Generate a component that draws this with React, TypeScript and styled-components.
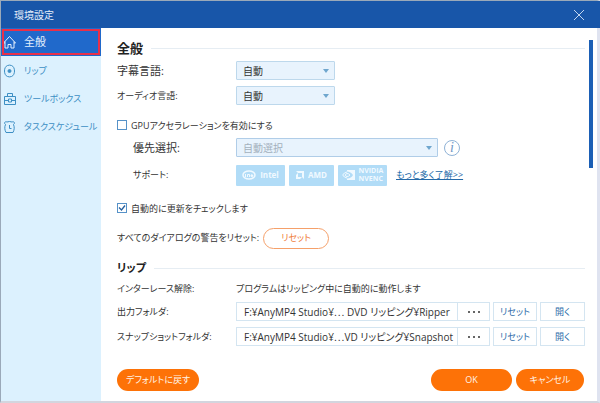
import React, { useState } from "react";
import styled, { createGlobalStyle } from "styled-components";

const blue = "#1856a9";
const orange = "#fd7207";
const uiFont = `"Open Sans", "Noto Sans CJK JP", sans-serif`;

const GlobalStyle = createGlobalStyle`
  *, *::before, *::after { box-sizing: border-box; }
  html, body, #root { height: 100%; }
  body {
    margin: 0;
    background: #fff;
    color: #333;
    font-family: ${uiFont};
    font-feature-settings: "palt";
    font-size: 11px;
    line-height: 16px;
  }
  button, input, select { font: inherit; font-feature-settings: inherit; color: inherit; margin: 0; }
`;

const Dialog = styled.div`
  min-height: 100%;
  display: grid;
  grid-template-rows: 27px 1fr;
  border: 1px solid #9aa9b9;
  border-right: 3px solid #dfe3f0;
  border-bottom: 2px solid #d3d5de;
`;

const TitleBar = styled.header`
  display: flex;
  align-items: center;
  justify-content: space-between;
  margin-right: -3px;
  padding: 0 15px 0 13px;
  background: ${blue};
  color: #e4eefa;
`;

const Title = styled.h1`
  margin: 0;
  font-size: 10px;
  font-weight: 400;
`;

const CloseButton = styled.button`
  display: flex;
  padding: 0;
  border: 0;
  background: none;
  color: #c3d6ef;
`;

const Body = styled.div`
  display: grid;
  grid-template-columns: 100px 1fr;
`;

const Sidebar = styled.nav`
  background: #dcf1fe;
`;

const NavItem = styled.button<{ $active?: boolean }>`
  display: flex;
  align-items: center;
  gap: 8px;
  width: 100%;
  height: 28px;
  padding: 0 0 0 1px;
  border: 0;
  background: ${(p) => (p.$active ? "#2069cb" : "none")};
  color: ${(p) => (p.$active ? "#e3effc" : "#3d8fc4")};
  outline: ${(p) => (p.$active ? "2px solid #e8304a" : "none")};
  outline-offset: -3px;
  text-align: left;
  white-space: nowrap;
  & > svg { flex: none; }
  &:first-child { margin-bottom: 1px; }
`;

const Main = styled.main`
  display: flex;
  flex-direction: column;
  min-width: 0;
  background: #fff;
`;

const ScrollArea = styled.div`
  display: flex;
  flex: 1;
  padding: 12px 4px 0 16px;
`;

const Settings = styled.div`
  flex: 1;
  min-width: 0;
`;

const ScrollTrack = styled.div`
  width: 4px;
  margin-left: 4px;
`;

const ScrollThumb = styled.div`
  height: 128px;
  background: #1b5fb5;
`;

const SectionTitle = styled.h2<{ $kana?: boolean }>`
  display: flex;
  align-items: center;
  gap: 8px;
  height: 16px;
  margin: ${(p) => (p.$kana ? "8px 0 3px" : "0 0 2px")};
  color: #222;
  font-size: ${(p) => (p.$kana ? 11 : 13)}px;
  line-height: 16px;
  &::after {
    content: "";
    flex: 1;
    height: 1px;
    background: #e6edf3;
  }
`;

const Kana = styled.span`
  font-size: 9px;
`;

const Row = styled.div<{ $height: number; $indent?: boolean }>`
  display: grid;
  grid-template-columns: ${(p) => (p.$indent ? "103px" : "119px")} minmax(0, 1fr);
  align-items: center;
  height: ${(p) => p.$height}px;
  margin-left: ${(p) => (p.$indent ? "16px" : "0")};
  white-space: nowrap;
`;

const Inline = styled.div<{ $height?: number; $gap?: number; $top?: number }>`
  display: flex;
  align-items: center;
  gap: ${(p) => p.$gap ?? 4}px;
  height: ${(p) => (p.$height ? `${p.$height}px` : "auto")};
  padding-top: ${(p) => p.$top ?? 0}px;
  white-space: nowrap;
`;

const SelectFrame = styled.span<{ $wide?: boolean }>`
  display: grid;
  align-items: center;
  width: ${(p) => (p.$wide ? "202px" : "99px")};
  height: 19px;
  & > * { grid-area: 1 / 1; }
  & > svg { justify-self: end; margin-right: 6px; pointer-events: none; }
`;

const Select = styled.select`
  appearance: none;
  width: 100%;
  height: 19px;
  padding: 0 6px;
  border: 1px solid #bdd8ec;
  border-radius: 1px;
  background: #e8f3fd;
  font-size: 10px;
  line-height: 16px;
  &:disabled { opacity: 1; color: #a3b0bc; border-color: #b0cde8; }
`;

const CheckFrame = styled.span`
  display: grid;
  place-items: center;
  width: 10px;
  height: 10px;
  & > * { grid-area: 1 / 1; }
  & > svg { pointer-events: none; visibility: hidden; }
  & > input:checked + svg { visibility: visible; }
`;

const CheckInput = styled.input`
  appearance: none;
  width: 10px;
  height: 10px;
  border: 1px solid #5692c8;
  background: #fff;
`;

const InfoButton = styled.button`
  width: 16px;
  height: 16px;
  padding: 0;
  border: 1px solid #8fb2d6;
  border-radius: 50%;
  background: #fff;
  color: #6f98c6;
  font: italic 14px/13px "Liberation Serif", serif;
`;

const Badge = styled.span<{ $width: number }>`
  display: flex;
  align-items: center;
  justify-content: center;
  gap: 4px;
  width: ${(p) => p.$width}px;
  height: 21px;
  border-radius: 1px;
  background: #b1dcf7;
  color: #f0f9ff;
  font-size: 8px;
  font-weight: 700;
  line-height: 8px;
  & > svg { flex: none; }
`;

const BadgeStack = styled.span`
  display: flex;
  flex-direction: column;
  font-size: 7px;
  line-height: 8px;
`;

const Link = styled.a`
  margin-left: 5px;
  color: #2469a8;
  font-size: 9px;
`;

const PillButton = styled.button<{ $width: number; $outline?: boolean }>`
  width: ${(p) => p.$width}px;
  height: ${(p) => (p.$outline ? 21 : 22)}px;
  padding: 0;
  border: ${(p) => (p.$outline ? "1px solid #f5a06a" : "0")};
  border-radius: 11px;
  background: ${(p) => (p.$outline ? "#fff" : orange)};
  color: ${(p) => (p.$outline ? "#f07c3a" : "#fff3e6")};
  font-size: 9px;
  white-space: nowrap;
`;

const PathControls = styled.div`
  display: grid;
  grid-template-columns: minmax(0, 1fr) 44px 45px;
  gap: 3px;
`;

const PathBox = styled.div`
  display: grid;
  grid-template-columns: minmax(0, 1fr) 32px;
  height: 19px;
  border: 1px solid #d4e5f1;
`;

const PathInput = styled.input`
  width: 100%;
  min-width: 0;
  padding: 0 0 0 7px;
  border: 0;
  background: none;
  font-size: 10px;
`;

const BrowseButton = styled.button`
  display: flex;
  align-items: center;
  justify-content: center;
  padding: 0;
  border: 0;
  border-left: 1px solid #d4e5f1;
  background: none;
  color: #666;
`;

const SmallButton = styled.button`
  height: 19px;
  padding: 0;
  border: 1px solid #d4e5f1;
  background: #fff;
  color: #2d6ca9;
  font-size: 9px;
  line-height: 16px;
`;

const Footer = styled.footer`
  display: flex;
  gap: 4px;
  padding: 0 13px 10px 16px;
`;

const Spacer = styled.span`
  flex: 1;
`;

const Icon = ({ children, w = 14, h = 14 }: { children: React.ReactNode; w?: number; h?: number }) => (
  <svg width={w} height={h} viewBox={`0 0 ${w} ${h}`} fill="none" stroke="currentColor" aria-hidden="true">
    {children}
  </svg>
);

const HomeIcon = () => (
  <Icon>
    <path d="M3 8H1.500L7.500 1.500 13.500 8H12v5H9V9.500H6V13H3zV6.500M12 8V6.500" />
  </Icon>
);

const DiscIcon = () => (
  <Icon>
    <path d="M5.500 1.500C3.400 2.300 2.500 4.600 2.500 7s.9 4.700 3 5.500M9.500 1.500c2.100.8 3 3.100 3 5.500s-.9 4.700-3 5.500M5.500 1.500q2-.8 4 0M5.500 12.500q2 .8 4 0" />
    <circle cx="7.500" cy="7" r="1.500" fill="currentColor" />
  </Icon>
);

const ToolboxIcon = () => (
  <Icon>
    <path d="M2.500 4.500h11v8h-11zM5.500 4.500v-3h5v3M2.500 8.500h4M9.500 8.500h4M6.500 7h3v3h-3z" />
  </Icon>
);

const ClockIcon = () => (
  <Icon>
    <path d="M3.500 4.500C1.800 3.500 2.500 1 5 2q2.500-1 5 0c2.500-1 3.200 1.500 1.500 2.500 1.300 3 .7 5.500-.5 8h-7c-1.200-2.500-1.800-5-.5-8ZM7.500 5v3.500h2" />
  </Icon>
);

const Arrow = () => (
  <Icon w={6} h={4}>
    <path d="M0 0h6L3 4z" fill="#6fa6ce" stroke="none" />
  </Icon>
);

const pages = [
  { label: "全般", icon: <HomeIcon /> },
  { label: "リップ", icon: <DiscIcon />, kana: true },
  { label: "ツールボックス", icon: <ToolboxIcon />, kana: true },
  { label: "タスクスケジュール", icon: <ClockIcon />, kana: true },
];

const Check = ({ id, initial }: { id: string; initial?: boolean }) => (
  <CheckFrame>
    <CheckInput id={id} type="checkbox" defaultChecked={initial} />
    <Icon w={8} h={8}>
      <path d="M1 3.500 3.500 6 7 1.500" stroke="#245f9e" strokeWidth="1.300" />
    </Icon>
  </CheckFrame>
);

const LanguageRow = ({ id, label, kana }: { id: string; label: string; kana?: boolean }) => (
  <Row $height={25}>
    <label htmlFor={id}>{kana ? <Kana>{label}</Kana> : label}</label>
    <SelectFrame>
      <Select id={id}>
        <option>自動</option>
      </Select>
      <Arrow />
    </SelectFrame>
  </Row>
);

const FolderRow = ({ id, label, path }: { id: string; label: string; path: string }) => (
  <Row $height={25}>
    <label htmlFor={id}>
      <Kana>{label}</Kana>
    </label>
    <PathControls>
      <PathBox>
        <PathInput id={id} type="text" defaultValue={path} />
        <BrowseButton aria-label="参照">
          <Icon w={12} h={2}>
            <path d="M0 0h2v2H0zM5 0h2v2H5zM10 0h2v2h-2z" fill="currentColor" stroke="none" />
          </Icon>
        </BrowseButton>
      </PathBox>
      <SmallButton>リセット</SmallButton>
      <SmallButton>開く</SmallButton>
    </PathControls>
  </Row>
);

export default function App() {
  const [page, setPage] = useState(0);
  return (
    <>
      <GlobalStyle />
      <Dialog>
        <TitleBar>
          <Title>環境設定</Title>
          <CloseButton aria-label="閉じる">
            <Icon w={12} h={12}>
              <path d="m1 1 10 10M11 1 1 11" />
            </Icon>
          </CloseButton>
        </TitleBar>
        <Body>
          <Sidebar>
            {pages.map((item, i) => (
              <NavItem key={item.label} $active={i === page} onClick={() => setPage(i)}>
                {item.icon}
                {item.kana ? <Kana>{item.label}</Kana> : item.label}
              </NavItem>
            ))}
          </Sidebar>
          <Main>
            <ScrollArea>
              <Settings>
                <SectionTitle>全般</SectionTitle>
                <LanguageRow id="subtitle" label="字幕言語:" />
                <LanguageRow id="audio" label="オーディオ言語:" kana />
                <Inline $height={29} $top={5}>
                  <Check id="gpu" />
                  <label htmlFor="gpu">
                    <Kana>GPUアクセラレーションを有効にする</Kana>
                  </label>
                </Inline>
                <Row $height={21} $indent>
                  <label htmlFor="priority">優先選択:</label>
                  <Inline $gap={6}>
                    <SelectFrame $wide>
                      <Select id="priority" disabled>
                        <option>自動選択</option>
                      </Select>
                      <Arrow />
                    </SelectFrame>
                    <InfoButton aria-label="情報">i</InfoButton>
                  </Inline>
                </Row>
                <Row $height={34} $indent>
                  <Kana>サポート:</Kana>
                  <Inline>
                    <Badge $width={49}>
                      <Icon w={14} h={10}>
                        <ellipse cx="7" cy="5" rx="6" ry="4" strokeWidth="1.500" />
                        <path d="M3.500 4v3M5.500 7V4.500h2V7M9 5.500h2Q10.500 4 9 5q-.8 2 2 1.800" />
                      </Icon>
                      Intel
                    </Badge>
                    <Badge $width={45}>
                      <Icon w={8} h={8}>
                        <path d="M0 0h8v8L6 6V2H2zM0 4l2-2v4h4L4 8H0z" fill="currentColor" stroke="none" />
                      </Icon>
                      AMD
                    </Badge>
                    <Badge $width={49}>
                      <Icon w={13} h={10}>
                        <path d="M5 0h8v10H5V8.500c3 0 5-1.500 6-3.500-1.500-2-3.500-3.500-6-3.500z" fill="currentColor" stroke="none" />
                        <path d="M5 2Q2 2.500.7 5 2 7.500 5 8M5 3.500Q3.500 4 3 5q.7 1.500 2 1.500Q7 6.500 8 5 7 3.500 5 3.500" />
                      </Icon>
                      <BadgeStack>
                        <span>NVIDIA</span>
                        <span>NVENC</span>
                      </BadgeStack>
                    </Badge>
                    <Link href="#more">もっと多く了解&gt;&gt;</Link>
                  </Inline>
                </Row>
                <Inline $height={32}>
                  <Check id="updates" initial />
                  <label htmlFor="updates">
                    <Kana>自動的に更新をチェックします</Kana>
                  </label>
                </Inline>
                <Inline $height={28}>
                  <Kana>すべてのダイアログの警告をリセット:</Kana>
                  <PillButton $width={66} $outline>リセット</PillButton>
                </Inline>
                <SectionTitle $kana>リップ</SectionTitle>
                <Row $height={20}>
                  <Kana>インターレース解除:</Kana>
                  <Kana>プログラムはリッピング中に自動的に動作します</Kana>
                </Row>
                <FolderRow id="output" label="出力フォルダ:" path="F:¥AnyMP4 Studio¥⋯ DVD リッピング¥Ripper" />
                <FolderRow id="snapshot" label="スナップショットフォルダ:" path="F:¥AnyMP4 Studio¥⋯VD リッピング¥Snapshot" />
              </Settings>
              <ScrollTrack>
                <ScrollThumb />
              </ScrollTrack>
            </ScrollArea>
            <Footer>
              <PillButton $width={82}>デフォルトに戻す</PillButton>
              <Spacer />
              <PillButton $width={81}>OK</PillButton>
              <PillButton $width={68}>キャンセル</PillButton>
            </Footer>
          </Main>
        </Body>
      </Dialog>
    </>
  );
}
